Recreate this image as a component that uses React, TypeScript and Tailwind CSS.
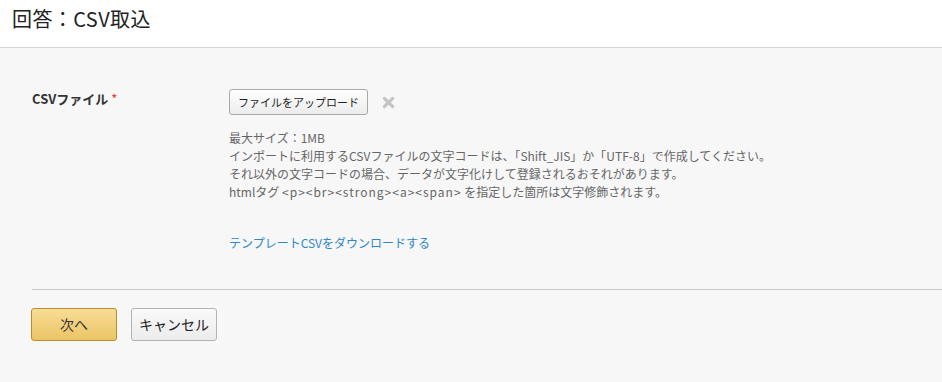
const font = { fontFamily: '"Noto Sans CJK JP", "Noto Sans", sans-serif' };

// CSV取込画面 — ヘッダー・ファイル選択フォーム・操作ボタン
export default function App() {
  return (
    <div className="flex min-h-[382px] flex-col bg-[#f7f7f7] text-[#333]" style={font}>
      <header className="h-[48px] border-b border-[#d3d3d3] bg-white pl-3 pt-[4px]">
        <h1 className="text-[20px] leading-[30px] tracking-[0.4px] text-[#222]">回答：CSV取込</h1>
      </header>

      <main className="pl-[32px]">
        <div className="mt-[41px] flex">
          <div className="w-[197px] pt-[1px] text-[13px] font-bold leading-[18px] text-[#333]">
            CSVファイル <span className="font-normal text-[#e0393e]">*</span>
          </div>
          <div className="flex flex-col">
            <div className="flex items-center">
              <button className="h-[26px] rounded-[3px] border border-[#a9a9a9] bg-gradient-to-b from-white to-[#ececec] px-[8px] text-[11px] leading-none text-[#222]">
                ファイルをアップロード
              </button>
              <svg className="ml-[14px]" width="13" height="13" viewBox="0 0 14 14">
                <path d="M2.5 2.5 L11.5 11.5 M11.5 2.5 L2.5 11.5" stroke="#c4c4c4" strokeWidth="3.4" strokeLinecap="round" />
              </svg>
            </div>
            <div className="mt-[14px] text-[12px] leading-[18px] text-[#666]">
              <p>最大サイズ：1MB</p>
              <p>インポートに利用するCSVファイルの文字コードは、「Shift_JIS」か「UTF-8」で作成してください。</p>
              <p>それ以外の文字コードの場合、データが文字化けして登録されるおそれがあります。</p>
              <p>
                htmlタグ <span className="tracking-[1px]">&lt;p&gt;&lt;br&gt;&lt;strong&gt;&lt;a&gt;&lt;span&gt;</span> を指定した箇所は文字修飾されます。
              </p>
            </div>
            <a href="#" className="mt-[33px] text-[12px] leading-[18px] text-[#2f86c8]">
              テンプレートCSVをダウンロードする
            </a>
          </div>
        </div>

        <div className="mt-[37px] border-t border-[#c8c8c8]" />

        <div className="mt-[18px] flex gap-[14px]">
          <button className="-ml-[1px] h-[33px] w-[86px] rounded-[3px] border border-[#b8902a] bg-gradient-to-b from-[#f8dd96] to-[#ebc463] text-[14px] text-[#333]">
            次へ
          </button>
          <button className="h-[33px] w-[86px] rounded-[3px] border border-[#b3b3b3] bg-gradient-to-b from-[#f9f9f9] to-[#ececec] text-[14px] text-[#222]">
            キャンセル
          </button>
        </div>
      </main>
    </div>
  );
}
